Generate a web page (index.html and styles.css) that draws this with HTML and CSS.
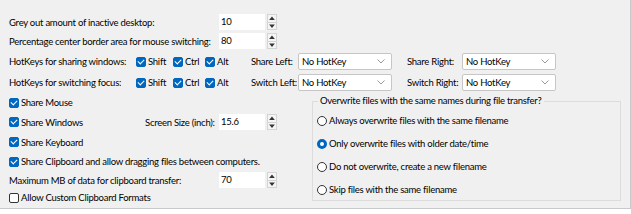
FILE: index.html
```html
<!DOCTYPE html>
<html lang="en">
<head>
  <meta charset="UTF-8" />
  <title>Mouse Without Borders - Other options</title>
  <link rel="stylesheet" href="styles.css">
</head>
<body>
  <div class="panel">
    <div class="row row-spin">
      <span class="lbl lbl-long">Grey out amount of inactive desktop:</span>
      <div class="spin">
        <span class="spin-val">10</span>
        <span class="spin-btns">
          <svg width="7" height="4" viewBox="0 0 7 4"><path d="M3.5 0.5 L6 3.5 L1 3.5 Z" fill="#333"/></svg>
          <svg width="7" height="4" viewBox="0 0 7 4"><path d="M1 0.5 L6 0.5 L3.5 3.5 Z" fill="#333"/></svg>
        </span>
      </div>
    </div>
    <div class="row row-spin second">
      <span class="lbl lbl-long">Percentage center border area for mouse switching:</span>
      <div class="spin">
        <span class="spin-val">80</span>
        <span class="spin-btns">
          <svg width="7" height="4" viewBox="0 0 7 4"><path d="M3.5 0.5 L6 3.5 L1 3.5 Z" fill="#333"/></svg>
          <svg width="7" height="4" viewBox="0 0 7 4"><path d="M1 0.5 L6 0.5 L3.5 3.5 Z" fill="#333"/></svg>
        </span>
      </div>
    </div>

    <div class="row row-hotkey">
      <span class="lbl lbl-hotkey">HotKeys for sharing windows:</span>
      <label class="check w-shift"><span class="box on"></span>Shift</label>
      <label class="check w-ctrl"><span class="box on"></span>Ctrl</label>
      <label class="check w-alt"><span class="box on"></span>Alt</label>
      <span class="lbl lbl-side">Share Left:</span>
      <div class="select">No HotKey<svg width="8" height="5" viewBox="0 0 8 5"><path d="M0.5 0.5 L4 4 L7.5 0.5" fill="none" stroke="#999"/></svg></div>
      <span class="lbl lbl-side right">Share Right:</span>
      <div class="select">No HotKey<svg width="8" height="5" viewBox="0 0 8 5"><path d="M0.5 0.5 L4 4 L7.5 0.5" fill="none" stroke="#999"/></svg></div>
    </div>
    <div class="row row-hotkey">
      <span class="lbl lbl-hotkey">HotKeys for switching focus:</span>
      <label class="check w-shift"><span class="box on"></span>Shift</label>
      <label class="check w-ctrl"><span class="box on"></span>Ctrl</label>
      <label class="check w-alt"><span class="box on"></span>Alt</label>
      <span class="lbl lbl-side">Switch Left:</span>
      <div class="select">No HotKey<svg width="8" height="5" viewBox="0 0 8 5"><path d="M0.5 0.5 L4 4 L7.5 0.5" fill="none" stroke="#999"/></svg></div>
      <span class="lbl lbl-side right">Switch Right:</span>
      <div class="select">No HotKey<svg width="8" height="5" viewBox="0 0 8 5"><path d="M0.5 0.5 L4 4 L7.5 0.5" fill="none" stroke="#999"/></svg></div>
    </div>

    <div class="lower">
      <div class="left-col">
        <div class="opt h1"><label class="check"><span class="box on"></span>Share Mouse</label></div>
        <div class="opt h2">
          <label class="check w-share"><span class="box on"></span>Share Windows</label>
          <span class="lbl lbl-screen">Screen Size (inch):</span>
          <div class="spin">
            <span class="spin-val">15.6</span>
            <span class="spin-btns">
              <svg width="7" height="4" viewBox="0 0 7 4"><path d="M3.5 0.5 L6 3.5 L1 3.5 Z" fill="#333"/></svg>
              <svg width="7" height="4" viewBox="0 0 7 4"><path d="M1 0.5 L6 0.5 L3.5 3.5 Z" fill="#333"/></svg>
            </span>
          </div>
        </div>
        <div class="opt h2"><label class="check"><span class="box on"></span>Share Keyboard</label></div>
        <div class="opt h1"><label class="check"><span class="box on"></span>Share Clipboard and allow dragging files between computers.</label></div>
        <div class="opt h3">
          <span class="lbl lbl-long">Maximum MB of data for clipboard transfer:</span>
          <div class="spin">
            <span class="spin-val">70</span>
            <span class="spin-btns">
              <svg width="7" height="4" viewBox="0 0 7 4"><path d="M3.5 0.5 L6 3.5 L1 3.5 Z" fill="#333"/></svg>
              <svg width="7" height="4" viewBox="0 0 7 4"><path d="M1 0.5 L6 0.5 L3.5 3.5 Z" fill="#333"/></svg>
            </span>
          </div>
        </div>
        <div class="opt h4"><label class="check"><span class="box"></span>Allow Custom Clipboard Formats</label></div>
      </div>

      <fieldset class="group">
        <legend>Overwrite files with the same names during file transfer?</legend>
        <label class="radio"><span class="dot"></span>Always overwrite files with the same filename</label>
        <label class="radio"><span class="dot on"></span>Only overwrite files with older date/time</label>
        <label class="radio"><span class="dot"></span>Do not overwrite, create a new filename</label>
        <label class="radio"><span class="dot"></span>Skip files with the same filename</label>
      </fieldset>
    </div>
  </div>
</body>
</html>
```

FILE: styles.css
```css
body {
  margin: 0;
  background: #ffffff;
  font-family: "Segoe UI", Lato, Arial, sans-serif;
  font-size: 9.5px;
  letter-spacing: -0.25px;
  color: #000000;
}

.panel {
  width: 631px;
  height: 209px;
  box-sizing: border-box;
  padding: 14px 0 0 9px;
  background: #f0f0f0;
  border-right: 1px solid #c9c9c9;
  border-bottom: 1px solid #c9c9c9;
}

.row {
  display: flex;
  align-items: center;
}

.row-spin {
  height: 16px;
}

.row-spin.second {
  margin-top: 3px;
}

.row-hotkey {
  height: 17px;
  margin-top: 4px;
}

.lbl {
  white-space: nowrap;
}

.lbl-long {
  width: 210px;
}

.lbl-hotkey {
  width: 127px;
}

.lbl-side {
  width: 47px;
}

.lbl-side.right {
  width: 55px;
  margin-left: 15px;
}

.lbl-screen {
  width: 74px;
}

/* numeric up/down */
.spin {
  display: flex;
  align-items: stretch;
  height: 16px;
}

.spin-val {
  width: 44px;
  background: #ffffff;
  padding-left: 2px;
  line-height: 16px;
}

.spin-btns {
  display: flex;
  flex-direction: column;
  width: 10px;
  margin-left: 2px;
  border: 1px solid #d4d4d4;
  box-sizing: border-box;
  background: #f5f5f5;
}

.spin-btns svg {
  flex: 1;
  width: 8px;
  display: block;
}

.spin-btns svg + svg {
  border-top: 1px solid #d4d4d4;
}

/* checkbox */
.check {
  display: flex;
  align-items: center;
  white-space: nowrap;
}

.box {
  width: 10px;
  height: 10px;
  box-sizing: border-box;
  border: 1px solid #333333;
  border-radius: 2px;
  background: #ffffff;
  margin-right: 2px;
  position: relative;
}

.box.on {
  border-color: #0067c0;
  background: #0067c0;
}

.box.on::after {
  content: "";
  position: absolute;
  left: 2px;
  top: 0px;
  width: 3px;
  height: 5px;
  border-right: 1px solid #ffffff;
  border-bottom: 1px solid #ffffff;
  transform: rotate(45deg);
}

.w-shift {
  width: 37px;
}

.w-ctrl {
  width: 32px;
}

.w-alt {
  width: 46px;
}

.w-share {
  width: 136px;
}

/* combo box */
.select {
  width: 94px;
  height: 17px;
  box-sizing: border-box;
  background: #ffffff;
  border: 1px solid #c6c6c6;
  border-radius: 2px;
  padding: 0 6px 0 3px;
  display: flex;
  align-items: center;
  justify-content: space-between;
}

/* lower half */
.lower {
  display: flex;
  margin-top: 2px;
}

.left-col {
  width: 303px;
}

.opt {
  display: flex;
  align-items: center;
}

.h1 {
  height: 19px;
}

.h2 {
  height: 20px;
}

.h3 {
  height: 18px;
}

.h4 {
  height: 17px;
}

.group {
  width: 309px;
  height: 108px;
  box-sizing: border-box;
  margin: 0;
  padding: 0 0 0 4px;
  border: 1px solid #dcdcdc;
}

.group legend {
  padding: 0 2px;
  margin-left: 1px;
  line-height: 16px;
}

.radio {
  display: flex;
  align-items: center;
  height: 23px;
}

.dot {
  width: 10px;
  height: 10px;
  box-sizing: border-box;
  border: 1px solid #333333;
  border-radius: 50%;
  background: #ffffff;
  margin-right: 2px;
}

.dot.on {
  border: 3px solid #0067c0;
}
```
